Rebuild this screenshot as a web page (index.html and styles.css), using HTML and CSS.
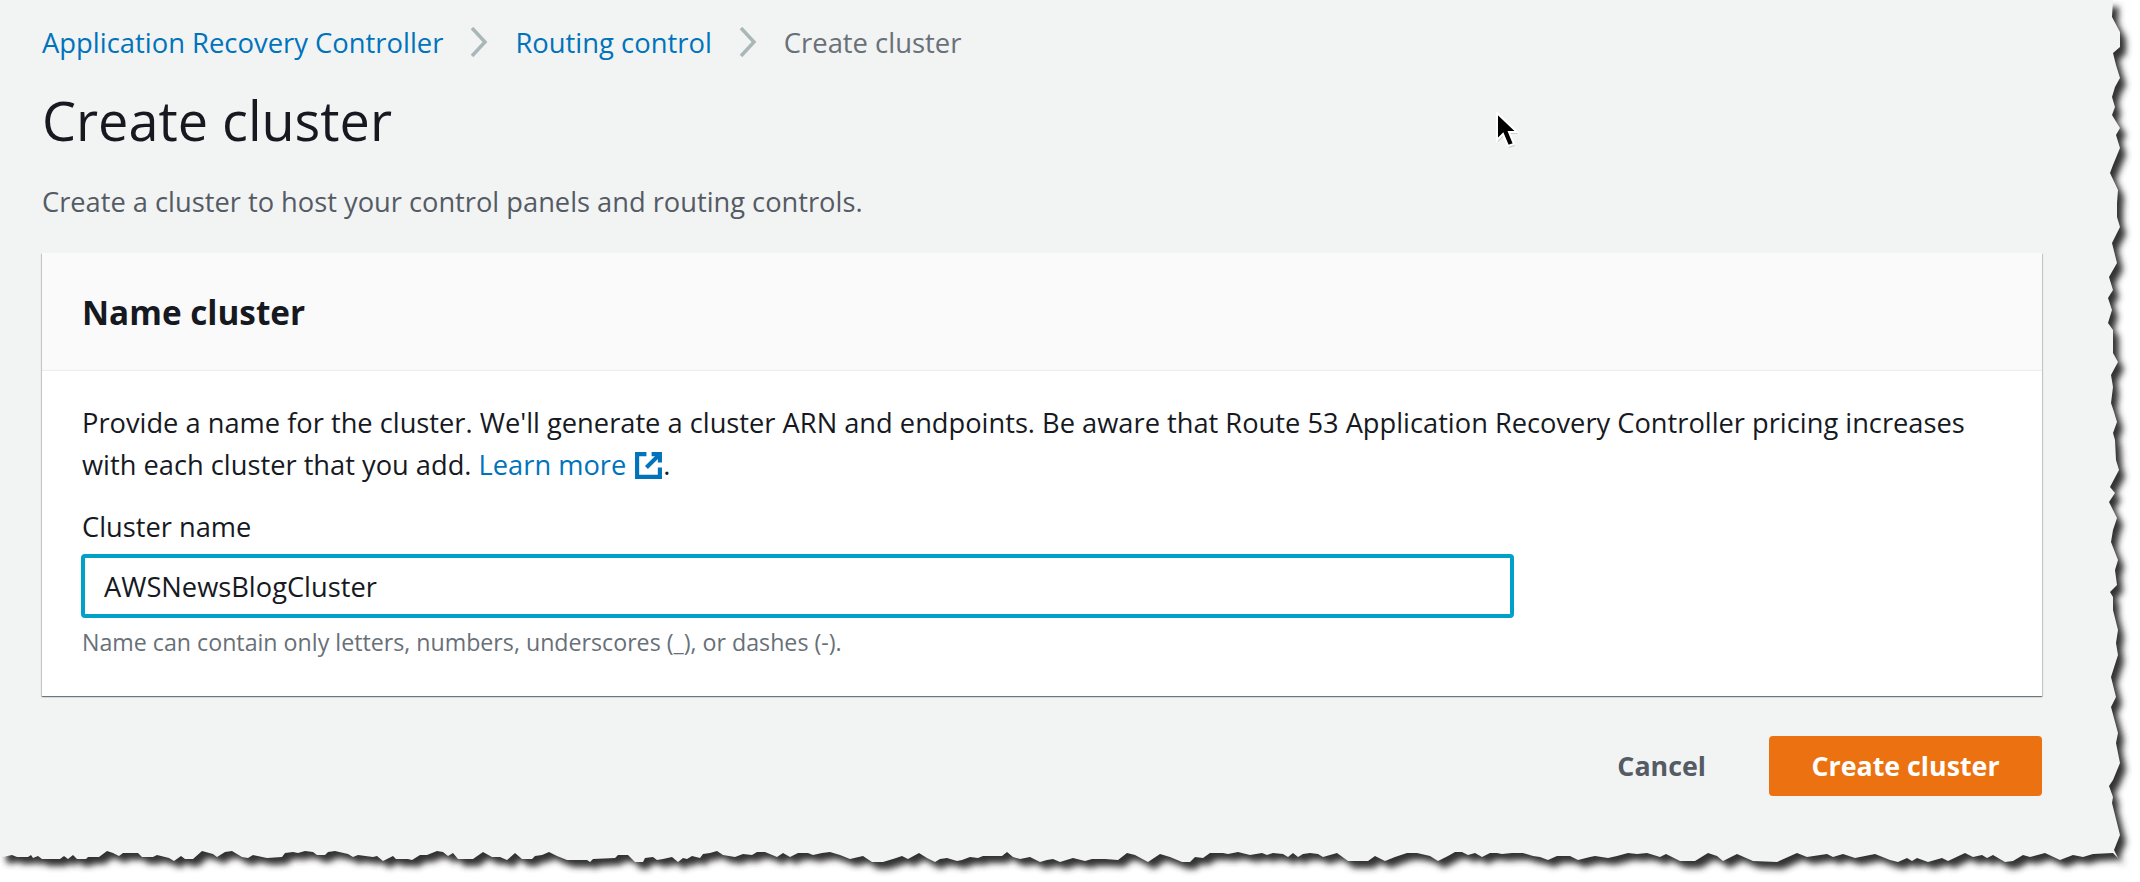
FILE: index.html
```html
<!DOCTYPE html>
<html lang="en">
<head>
    <meta charset="UTF-8">
    <title>Create cluster</title>
    <link rel="stylesheet" href="styles.css">
</head>
<body>
<svg class="torn-sheet" width="2140" height="882" viewBox="0 0 2140 882">
    <defs>
        <filter id="blur" x="-5%" y="-5%" width="110%" height="110%"><feGaussianBlur stdDeviation="3.2"/></filter>
        <path id="edge" d="M0 0V854L3 857L12 855L17 857L28 857L31 855L33 858L38 856L42 859L60 859L64 856L68 859L73 855L77 859L86 859L88 857L99 857L107 851L113 853L119 856L123 853L138 853L142 857L153 857L157 855L165 857L169 858L174 861L181 856L185 859L193 859L202 851L213 854L217 857L225 852L232 851L242 857L248 858L253 855L267 858L282 857L285 853L293 852L298 853L305 851L313 852L317 855L325 855L328 852L335 851L348 854L353 857L358 855L373 857L377 856L383 861L393 856L396 859L408 859L412 860L420 855L427 855L437 851L443 852L448 856L453 853L458 859L473 859L483 852L492 857L500 857L507 860L515 853L522 859L532 859L535 856L542 855L549 852L557 856L562 858L567 860L587 860L590 862L593 859L615 858L618 855L628 855L635 862L643 862L645 858L653 857L657 860L663 859L672 857L678 862L683 858L687 859L692 856L700 858L703 854L710 853L717 851L723 855L735 857L743 854L752 855L757 852L765 852L777 857L783 853L790 857L798 853L808 853L813 855L822 853L830 852L840 855L850 859L863 856L872 862L883 862L893 859L902 856L908 859L919 853L927 858L935 862L940 859L947 858L957 861L962 860L970 857L978 858L983 856L1002 856L1007 852L1013 857L1020 859L1030 857L1040 862L1047 860L1053 859L1060 862L1073 858L1085 861L1092 859L1105 859L1118 860L1127 853L1135 855L1148 862L1160 854L1170 857L1182 862L1190 862L1195 857L1203 858L1210 853L1223 853L1228 854L1238 852L1250 855L1262 853L1267 855L1273 853L1283 854L1288 857L1293 853L1298 857L1303 854L1310 853L1318 854L1323 857L1337 853L1348 861L1368 861L1375 856L1385 861L1395 857L1407 853L1417 853L1430 856L1438 861L1448 856L1455 852L1462 852L1468 855L1475 853L1482 857L1490 853L1497 853L1502 854L1512 853L1523 853L1533 856L1540 857L1548 860L1557 856L1570 856L1578 860L1590 857L1595 856L1608 858L1617 856L1628 853L1637 854L1647 853L1660 857L1666 854L1680 861L1695 861L1708 853L1717 856L1723 861L1737 854L1753 861L1777 862L1797 853L1807 857L1827 854L1833 857L1843 854L1855 858L1875 854L1890 860L1898 862L1907 858L1912 861L1917 858L1928 862L1942 858L1948 861L1965 853L1973 857L1982 855L1987 858L1993 855L2005 862L2013 861L2023 855L2030 857L2045 853L2060 860L2073 855L2083 857L2093 854L2113 853L2118 858L2114 850L2120 835L2117 823L2113 807L2112 803L2113 797L2109 786L2113 780L2120 763L2116 743L2118 733L2111 707L2116 697L2111 677L2118 655L2116 643L2118 630L2113 610L2113 597L2110 592L2117 585L2115 570L2118 560L2111 542L2113 530L2117 518L2109 502L2115 493L2110 487L2119 470L2116 460L2115 440L2113 433L2117 422L2114 412L2111 403L2113 387L2111 375L2118 362L2113 353L2113 330L2108 323L2112 310L2108 298L2113 290L2109 277L2117 263L2112 243L2120 227L2117 217L2117 203L2118 190L2110 173L2113 165L2120 148L2116 135L2120 128L2112 115L2115 107L2112 97L2115 87L2120 78L2116 65L2113 53L2120 47L2120 32L2112 17L2113 0Z"/>
    </defs>
    <use href="#edge" class="edge-shadow" x="6" y="7" filter="url(#blur)"/>
    <use href="#edge" class="edge-sheet"/>
</svg>

<div class="page">
    <nav class="crumbs">
        <a href="#">Application Recovery Controller</a>
        <svg class="chevron" width="18" height="30" viewBox="0 0 18 30"><path d="M2 1l13 14L2 29"/></svg>
        <a href="#">Routing control</a>
        <svg class="chevron" width="18" height="30" viewBox="0 0 18 30"><path d="M2 1l13 14L2 29"/></svg>
        <span>Create cluster</span>
    </nav>

    <h1>Create cluster</h1>
    <p class="subtitle">Create a cluster to host your control panels and routing controls.</p>

    <div class="panel">
        <div class="panel-head"><h2>Name cluster</h2></div>
        <div class="panel-body">
            <div class="intro">
                <p>Provide a name for the cluster. We'll generate a cluster ARN and endpoints. Be aware that Route 53 Application Recovery Controller pricing increases</p>
                <p><span>with each cluster that you add.</span> <a href="#">Learn more</a> <svg class="ext" width="29" height="29" viewBox="0 0 28 28"><path d="M12 3H3v22h22v-9"/><path d="M17 3h8v8"/><path d="M25 3L12 16"/></svg><span>.</span></p>
            </div>
            <div class="field-label">Cluster name</div>
            <div class="text-input">AWSNewsBlogCluster</div>
            <div class="hint">Name can contain only letters, numbers, underscores (_), or dashes (-).</div>
        </div>
    </div>

    <div class="actions">
        <a class="cancel" href="#">Cancel</a>
        <a class="primary" href="#">Create cluster</a>
    </div>
</div>

<svg class="cursor" width="24" height="38" viewBox="0 0 24 38">
    <path class="cursor-shade" d="M3 3v27l6-6 5 12 6-2-5-12h8z"/>
    <path class="cursor-arrow" d="M2 1v27l6-6 5 12 6-2-5-12h8z"/>
</svg>
</body>
</html>
```

FILE: styles.css
```css
*{margin: 0;padding: 0;box-sizing: border-box;}
html,body{width: 2140px;height: 882px;overflow: hidden;}
body{background: #fff;font-family: "Open Sans", Lato, sans-serif;color: #16191f;font-size: 27.25px;position: relative;}
a{color: #0073bb;text-decoration: none;}

.torn-sheet{position: absolute;left: 0;top: 0;}
.edge-shadow{fill: #333;}
.edge-sheet{fill: #f2f3f3;}

.page{position: relative;width: 2042px;margin-left: 42px;}

.crumbs{display: flex;align-items: center;gap: 27px;height: 30px;margin-top: 27px;color: #687078;}
.crumbs a,.crumbs span{font-size: 27.4px;}
.chevron{flex: none;}
.chevron path{fill: none;stroke: #aab7b8;stroke-width: 3.5;}

h1{font-size: 54px;font-weight: 400;line-height: 70px;margin-top: 28px;}
.subtitle{color: #545b64;line-height: 42px;margin-top: 26px;}

.panel{width: 2000px;margin-top: 30px;background: #fff;box-shadow: 0 1px 1px 0 rgba(0,28,36,.4),1px 1px 1px 0 rgba(0,28,36,.15),-1px 1px 1px 0 rgba(0,28,36,.15);}
.panel-head{height: 118px;background: #fafafa;border-bottom: 1px solid #eaeded;display: flex;align-items: center;padding-left: 40px;}
h2{font-size: 33.3px;font-weight: 700;}
.panel-body{padding: 31px 40px 0;height: 325px;}
.intro{line-height: 42px;}
.ext{vertical-align: -5px;margin-left: 1px;}
.ext path{fill: none;stroke: #0073bb;stroke-width: 4;}
.field-label{line-height: 42px;margin-top: 20px;}
.text-input{width: 1433px;height: 64px;margin-top: 6px;margin-left: -1px;border: 4px solid #00a1c9;border-radius: 4px;background: #fff;padding-left: 19px;display: flex;align-items: center;}
.hint{font-size: 23.2px;line-height: 34px;color: #687078;margin-top: 7px;}

.actions{display: flex;justify-content: flex-end;align-items: center;width: 2000px;margin-top: 40px;}
.cancel{color: #545b64;font-size: 26.8px;font-weight: 700;margin-right: 63px;padding-bottom: 2px;}
.primary{display: flex;align-items: center;justify-content: center;width: 273px;height: 60px;padding-bottom: 2px;background: #ec7211;border-radius: 4px;color: #fff;font-size: 26.8px;font-weight: 700;}

.cursor{position: absolute;left: 1495px;top: 112px;}
.cursor-shade{fill: #888;opacity: .35;}
.cursor-arrow{fill: #000;stroke: #fff;stroke-width: 2;}
```
